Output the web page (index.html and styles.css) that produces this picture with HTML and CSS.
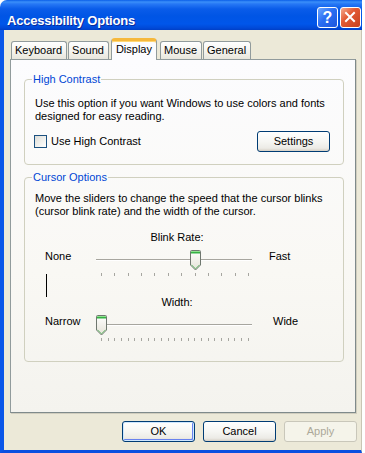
FILE: index.html
```html
<!DOCTYPE html>
<html>
<head>
<meta charset="utf-8">
<link rel="stylesheet" href="styles.css">
</head>
<body>
<div class="window">
  <div class="titlebar">
    <span class="title">Accessibility Options</span>
    <div class="tb-buttons">
      <span class="tb-btn help">?</span>
      <span class="tb-btn close"><svg width="21" height="21" viewBox="0 0 21 21"><path d="M6 6 L14 14 M14 6 L6 14" stroke="#fff" stroke-width="2" stroke-linecap="square"/></svg></span>
    </div>
  </div>
  <div class="client">
    <div class="tabs">
      <div class="tab">Keyboard</div>
      <div class="tab">Sound</div>
      <div class="tab active">Display</div>
      <div class="tab">Mouse</div>
      <div class="tab">General</div>
    </div>
    <div class="panel">
      <fieldset class="group g1">
        <legend>High Contrast</legend>
        <p class="desc">Use this option if you want Windows to use colors and fonts<br>designed for easy reading.</p>
        <div class="hc-row">
          <label class="check"><span class="box"></span>Use High Contrast</label>
          <button class="btn settings">Settings</button>
        </div>
      </fieldset>
      <fieldset class="group g2">
        <legend>Cursor Options</legend>
        <p class="desc">Move the sliders to change the speed that the cursor blinks<br>(cursor blink rate) and the width of the cursor.</p>
        <div class="sliders">
          <div class="caption cap1">Blink Rate:</div>
          <div class="end-l row2">None</div>
          <div class="slider row2">
            <div class="track"></div>
            <div class="ticks"><i></i><i></i><i></i><i></i><i></i><i></i><i></i><i></i><i></i><i></i><i></i><i></i></div>
            <svg class="thumb" style="left:94px" width="11" height="21" viewBox="0 0 11 21"><defs><linearGradient id="tg1" x1="0" y1="0" x2="0" y2="1"><stop offset="0" stop-color="#ffffff"/><stop offset="1" stop-color="#e4e2d6"/></linearGradient></defs><path d="M1.5 0.5 H9.5 Q10.5 0.5 10.5 1.5 V15 L5.5 20 L0.5 15 V1.5 Q0.5 0.5 1.5 0.5 Z" fill="url(#tg1)" stroke="#6f776f"/><rect x="1" y="1" width="9" height="2.5" fill="#35b245"/><rect x="1" y="1" width="9" height="1" fill="#8fe08f"/><path d="M1.5 14.8 L5.5 18.8 L9.5 14.8" fill="none" stroke="#6cbf72"/></svg>
          </div>
          <div class="end-r row2">Fast</div>
          <div class="preview"></div>
          <div class="caption cap2">Width:</div>
          <div class="end-l row5">Narrow</div>
          <div class="slider row5">
            <div class="track"></div>
            <div class="ticks"><i></i><i></i><i></i><i></i><i></i><i></i><i></i><i></i><i></i><i></i><i></i><i></i><i></i><i></i><i></i><i></i><i></i><i></i><i></i><i></i><i></i><i></i><i></i></div>
            <svg class="thumb" style="left:0px" width="11" height="21" viewBox="0 0 11 21"><defs><linearGradient id="tg2" x1="0" y1="0" x2="0" y2="1"><stop offset="0" stop-color="#ffffff"/><stop offset="1" stop-color="#e4e2d6"/></linearGradient></defs><path d="M1.5 0.5 H9.5 Q10.5 0.5 10.5 1.5 V15 L5.5 20 L0.5 15 V1.5 Q0.5 0.5 1.5 0.5 Z" fill="url(#tg2)" stroke="#6f776f"/><rect x="1" y="1" width="9" height="2.5" fill="#35b245"/><rect x="1" y="1" width="9" height="1" fill="#8fe08f"/><path d="M1.5 14.8 L5.5 18.8 L9.5 14.8" fill="none" stroke="#6cbf72"/></svg>
          </div>
          <div class="end-r wide row5">Wide</div>
        </div>
      </fieldset>
    </div>
    <div class="actions">
      <button class="btn default">OK</button>
      <button class="btn">Cancel</button>
      <button class="btn disabled">Apply</button>
    </div>
  </div>
</div>
</body>
</html>
```

FILE: styles.css
```css
* { box-sizing: border-box; }
html, body { margin: 0; padding: 0; background: #ffffff; }
body {
  font-family: "Liberation Sans", Arial, sans-serif;
  font-size: 11px;
  line-height: 13px;
  color: #000;
}
.window {
  width: 362px;
  height: 453px;
  display: flex;
  flex-direction: column;
}
.titlebar {
  height: 30px;
  flex: none;
  display: flex;
  align-items: center;
  justify-content: space-between;
  padding: 0 1px 0 7px;
  border-radius: 7px 0 0 0;
  background: linear-gradient(#0a5ee8 0, #3b8ff9 2px, #2677f5 4px, #0a5ce9 9px, #0055e5 16px, #0056ea 24px, #0049d8 28px, #003fc6 30px);
}
.title {
  color: #fff;
  font-weight: bold;
  font-size: 13px;
  letter-spacing: -0.2px;
  padding-top: 10px;
  text-shadow: 1px 1px 0 #0b2a9a;
}
.tb-buttons { display: flex; gap: 2px; padding-top: 5px; }
.tb-btn {
  width: 21px;
  height: 21px;
  border: 1px solid #fff;
  border-radius: 3px;
  display: flex;
  align-items: center;
  justify-content: center;
  overflow: hidden;
}
.tb-btn svg { flex: none; }
.help {
  background: linear-gradient(135deg, #6aa6ff 0%, #2a6ef3 45%, #1d56dc 100%);
  color: #fff;
  font-weight: bold;
  font-size: 16px;
  font-family: "Liberation Sans", Arial, sans-serif;
}
.close {
  background: linear-gradient(135deg, #f4ab90 0%, #e35a34 40%, #c7401e 100%);
}
.client {
  flex: 1;
  background: #ece9d8;
  border-left: 4px solid #0a56e8;
  border-right: 1px solid #c9c6b4;
  border-bottom: 3px solid #0a4fe0;
  padding: 8px 4px 0 6px;
  display: flex;
  flex-direction: column;
}
.tabs {
  display: flex;
  align-items: flex-end;
  padding-left: 1px;
  position: relative;
  z-index: 1;
}
.tab {
  height: 18px;
  padding: 2px 4px 0 3px;
  margin-right: 1px;
  border: 1px solid #919b9c;
  border-bottom: none;
  border-radius: 3px 3px 0 0;
  background: linear-gradient(#ffffff, #f3f2ec 60%, #e8e6dc);
  white-space: nowrap;
}
.tab.active {
  height: 22px;
  margin: 0 2px -1px 1px;
  padding: 2px 4px 0 4px;
  background: #fcfcfe;
  border-top: 3px solid #f6b83c;
  box-shadow: inset 0 1px 0 #ffd774;
  border-radius: 4px 4px 0 0;
}
.tab.active + .tab { margin-left: 1px; }
.panel {
  height: 354px;
  width: 346px;
  border: 1px solid #919b9c;
  border-right-color: #7f8a8b;
  border-bottom-color: #7f8a8b;
  box-shadow: 1px 1px 0 #d0cdbe;
  background: linear-gradient(#fcfcfe 0%, #f9f8f4 60%, #f4f3ee 100%);
  padding: 0 11px 0 13px;
}
.group {
  margin: 0;
  border: 1px solid #d0d0bf;
  border-radius: 4px;
  padding: 0 10px 0 10px;
  min-width: 0;
}
.group legend {
  color: #0046d5;
  padding: 0 1px;
  margin-left: -3px;
  line-height: 13px;
}
.g1 { margin-top: 13px; padding-top: 11px; padding-bottom: 12px; }
.g2 { margin-top: 6px; padding-top: 8px; padding-bottom: 19px; }
.desc { margin: 0; }
.hc-row {
  margin-top: 8px;
  display: flex;
  align-items: center;
  justify-content: space-between;
  padding-right: 3px;
}
.check {
  display: flex;
  align-items: center;
  gap: 4px;
  margin-left: -1px;
}
.box {
  width: 13px;
  height: 13px;
  border: 1px solid #1c5180;
  background: linear-gradient(135deg, #dcdcd7 0%, #f2f2ef 60%, #ffffff 100%);
}
.btn {
  font-family: inherit;
  font-size: 11px;
  line-height: 13px;
  color: #000;
  width: 73px;
  height: 21px;
  padding: 0;
  border: 1px solid #003c74;
  border-radius: 3px;
  background: linear-gradient(#ffffff 0%, #f6f6f3 50%, #ecebe6 85%, #d6d0c5 100%);
}
.btn.settings { width: 73px; }
.btn.default {
  box-shadow: inset 0 0 0 1px #cee7ff, inset -1px -1px 0 1px #6982ee;
}
.btn.disabled {
  border-color: #c9c7ba;
  background: #f5f4ea;
  color: #aca899;
}
.sliders {
  display: grid;
  grid-template-columns: 51px 156px auto;
  grid-template-rows: 19px 24px 22px 19px 27px;
  margin: 13px 0 0 10px;
}
.caption { grid-column: 2; text-align: center; padding-left: 6px; }
.cap1 { grid-row: 1; }
.cap2 { grid-row: 4; }
.end-l { grid-column: 1; padding-top: 0; }
.end-r { grid-column: 3; padding-left: 17px; }
.end-r.wide { padding-left: 21px; }
.row2 { grid-row: 2; }
.row5 { grid-row: 5; }
.slider {
  grid-column: 2;
  position: relative;
  display: flex;
  flex-direction: column;
}
.track {
  margin-top: 9px;
  height: 2px;
  border-top: 1px solid #a7a69f;
  border-bottom: 1px solid #ffffff;
}
.ticks {
  margin: 12px 3px 0 5px;
  display: flex;
  justify-content: space-between;
}
.ticks i {
  width: 1px;
  height: 3px;
  background: #a6a6a0;
}
.thumb { position: absolute; top: 0; }
.preview {
  grid-column: 1;
  grid-row: 3;
  width: 1px;
  height: 23px;
  margin-left: 1px;
  background: #000;
}
.actions {
  display: flex;
  justify-content: flex-end;
  gap: 8px;
  margin-top: 8px;
  padding-right: 0;
}
```
